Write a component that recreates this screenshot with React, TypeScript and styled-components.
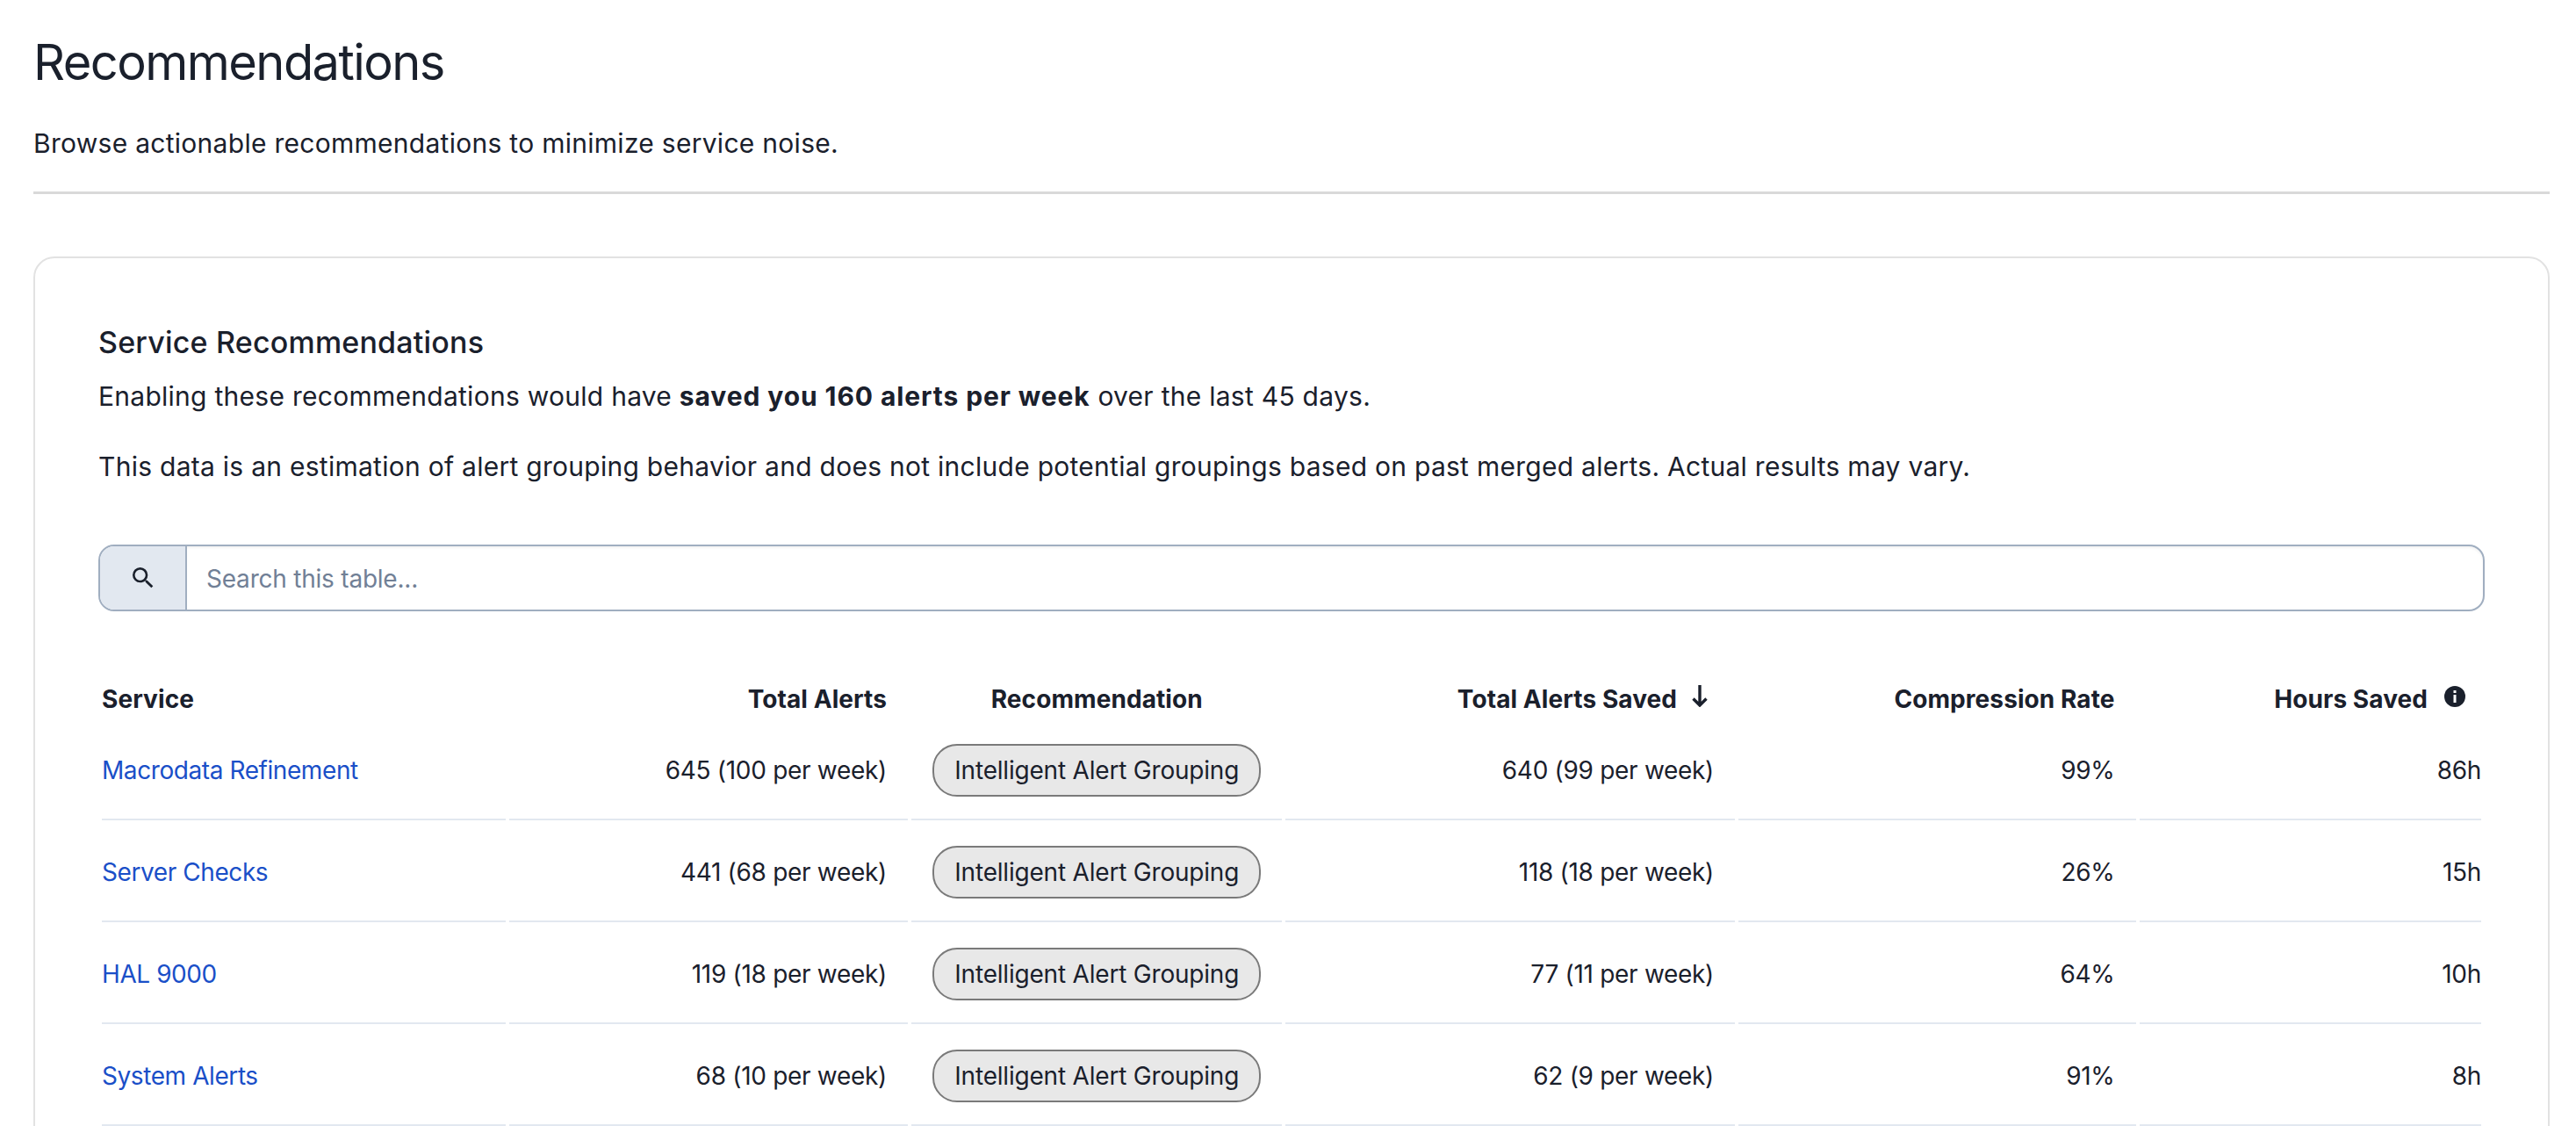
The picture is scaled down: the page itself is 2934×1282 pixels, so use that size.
import React from "react";
import styled, { createGlobalStyle } from "styled-components";

const Global = createGlobalStyle`
  html, body { margin: 0; padding: 0; height: 100%; overflow: hidden; background: #fff; }
  body { font-family: Inter, "Liberation Sans", sans-serif; color: #1a202c; }
  #root { height: 100%; }
`;

const Page = styled.main`
  padding: 32px 30px 0 38px;
`;
const Title = styled.h1`
  margin: 0;
  font-size: 56px;
  line-height: 78px;
  font-weight: 400;
  letter-spacing: -1.55px;
`;
const Subtitle = styled.p`
  margin: 32px 0 0;
  font-size: 30px;
  line-height: 42px;
  letter-spacing: 0.28px;
`;
const Divider = styled.hr`
  margin: 34px 0 71px;
  height: 3px;
  border: 0;
  background: #d9d9d9;
`;
const Card = styled.section`
  border: 2px solid #e2e2e2;
  border-radius: 24px;
  padding: 73px 72px 60px;
`;
const CardTitle = styled.h2`
  margin: 0 0 17px;
  font-size: 34px;
  line-height: 46px;
  font-weight: 500;
  letter-spacing: 0.2px;
`;
const Para = styled.p`
  margin: 0 0 38px;
  font-size: 30px;
  line-height: 42px;
  letter-spacing: 0.27px;
  b { font-weight: 700; letter-spacing: 0.9px; }
`;
const SearchBar = styled.div`
  display: flex;
  height: 72px;
  margin-top: 68px;
  border: 2px solid #a0aec0;
  border-radius: 18px;
  overflow: hidden;
  box-shadow: inset 0 2px 3px rgba(0, 0, 0, 0.05);
`;
const SearchAddon = styled.div`
  flex: 0 0 97px;
  display: flex;
  align-items: center;
  justify-content: center;
  background: #e2e8f0;
  border-right: 2px solid #a0aec0;
  color: #1a202c;
`;
const SearchInput = styled.input`
  flex: 1;
  border: 0;
  outline: 0;
  background: transparent;
  padding: 2px 22px 0;
  font: 400 28px Inter, sans-serif;
  letter-spacing: -0.22px;
  color: #1a202c;
  &::placeholder { color: #718096; opacity: 1; }
`;
const Table = styled.table`
  width: 2718px;
  margin-top: 74px;
  table-layout: fixed;
  border-collapse: separate;
  border-spacing: 4px 0;
`;
const Th = styled.th<{ $align?: string; $pad?: number }>`
  box-sizing: border-box;
  height: 48px;
  padding: 4px ${(p) => p.$pad ?? 0}px 0 0;
  text-align: ${(p) => p.$align ?? "right"};
  font-size: 28px;
  font-weight: 700;
  letter-spacing: 0.08px;
  white-space: nowrap;
`;
const HeadIcon = styled.svg<{ $gap: number }>`
  display: inline-block;
  vertical-align: 1px;
  margin-left: ${(p) => p.$gap}px;
`;
const Td = styled.td<{ $align?: string; $pad?: number }>`
  box-sizing: border-box;
  height: 116px;
  padding: 4px ${(p) => p.$pad ?? 0}px 0 0;
  border-bottom: 2px solid #e2e8f0;
  text-align: ${(p) => p.$align ?? "right"};
  font-size: 28px;
  letter-spacing: -0.3px;
  white-space: nowrap;
`;
const ServiceLink = styled.a`
  color: #1a4fc8;
  text-decoration: none;
  letter-spacing: -0.42px;
`;
const Pill = styled.span`
  display: inline-flex;
  align-items: center;
  justify-content: center;
  box-sizing: border-box;
  width: 374px;
  height: 60px;
  background: #e8e8e8;
  border: 2px solid #7a7a7a;
  border-radius: 28px;
  letter-spacing: -0.2px;
`;

const rows = [
  ["Macrodata Refinement", "645 (100 per week)", "640 (99 per week)", "99%", "86h"],
  ["Server Checks", "441 (68 per week)", "118 (18 per week)", "26%", "15h"],
  ["HAL 9000", "119 (18 per week)", "77 (11 per week)", "64%", "10h"],
  ["System Alerts", "68 (10 per week)", "62 (9 per week)", "91%", "8h"],
];
const widths = [459, 454, 422, 511, 452, 389];

export default function App() {
  return (
    <>
      <Global />
      <Page>
        <Title>Recommendations</Title>
        <Subtitle>Browse actionable recommendations to minimize service noise.</Subtitle>
        <Divider />
        <Card>
          <CardTitle>Service Recommendations</CardTitle>
          <Para>
            Enabling these recommendations would have <b>saved you 160 alerts per week</b> over the last 45 days.
          </Para>
          <Para>
            This data is an estimation of alert grouping behavior and does not include potential groupings based on past merged alerts. Actual results may vary.
          </Para>
          <SearchBar>
            <SearchAddon>
              <svg width="32" height="32" viewBox="0 0 24 24" fill="currentColor">
                <path d="M15.5 14h-.79l-.28-.27A6.471 6.471 0 0 0 16 9.5 6.5 6.5 0 1 0 9.5 16c1.61 0 3.09-.59 4.23-1.57l.27.28v.79l5 4.99L20.49 19l-4.99-5zm-6 0C7.01 14 5 11.99 5 9.5S7.01 5 9.5 5 14 7.01 14 9.5 11.99 14 9.5 14z" />
              </svg>
            </SearchAddon>
            <SearchInput placeholder="Search this table..." />
          </SearchBar>
          <Table>
            <colgroup>
              {widths.map((w, i) => (
                <col key={i} width={w} />
              ))}
            </colgroup>
            <thead>
              <tr>
                <Th $align="left">Service</Th>
                <Th $pad={24}>Total Alerts</Th>
                <Th $align="center">Recommendation</Th>
                <Th $pad={30}>
                  Total Alerts Saved
                  <HeadIcon $gap={16} width="20" height="26" viewBox="0 0 20 26" fill="none" stroke="#1a202c" strokeWidth="3.4">
                    <path d="M10 1v23M2.500 16.500l7.500 7.500 7.500-7.500" />
                  </HeadIcon>
                </Th>
                <Th $pad={24}>Compression Rate</Th>
                <Th $pad={18}>
                  Hours Saved
                  <HeadIcon $gap={19} width="24" height="24" viewBox="0 0 24 24">
                    <circle cx="12" cy="12" r="12" fill="#1a202c" />
                    <rect x="10.500" y="10" width="3" height="9" fill="#fff" />
                    <rect x="10.500" y="5" width="3" height="3" fill="#fff" />
                  </HeadIcon>
                </Th>
              </tr>
            </thead>
            <tbody>
              {rows.map((r) => (
                <tr key={r[0]}>
                  <Td $align="left">
                    <ServiceLink href="#">{r[0]}</ServiceLink>
                  </Td>
                  <Td $pad={24}>{r[1]}</Td>
                  <Td $align="center">
                    <Pill>Intelligent Alert Grouping</Pill>
                  </Td>
                  <Td $pad={24}>{r[2]}</Td>
                  <Td $pad={24}>{r[3]}</Td>
                  <Td>{r[4]}</Td>
                </tr>
              ))}
            </tbody>
          </Table>
        </Card>
      </Page>
    </>
  );
}
